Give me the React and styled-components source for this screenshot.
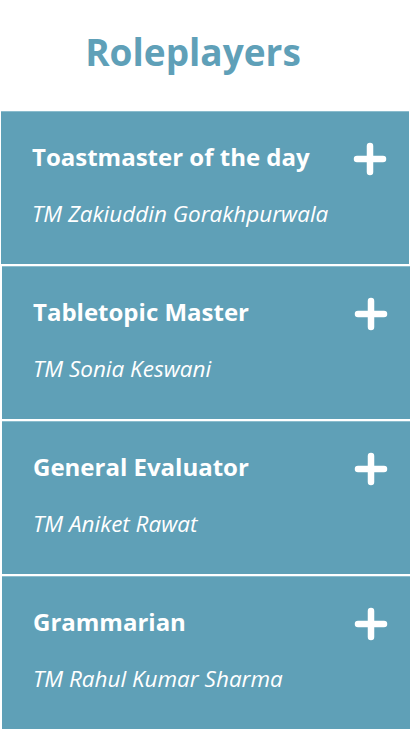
import React from 'react'
import styled, {createGlobalStyle} from 'styled-components'

const roles = [
  {role: 'Toastmaster of the day', name: 'TM Zakiuddin Gorakhpurwala'},
  {role: 'Tabletopic Master', name: 'TM Sonia Keswani'},
  {role: 'General Evaluator', name: 'TM Aniket Rawat'},
  {role: 'Grammarian', name: 'TM Rahul Kumar Sharma'},
]

function PlusIcon() {
  return (
    <svg width="34" height="34" viewBox="0 0 34 34">
      <path d="M17 4v26M4 17h26" stroke="#fff" strokeWidth="6.5" strokeLinecap="round" />
    </svg>
  )
}

export default function App() {
  return (
    <>
      <GlobalStyle />
      <Page>
        <Title>Roleplayers</Title>
        <List>
          {roles.map((r, i) => (
            <Card key={r.role} $shift={i > 0}>
              <CardHead>
                <Role>{r.role}</Role>
                <Toggle><PlusIcon /></Toggle>
              </CardHead>
              <Person>{r.name}</Person>
            </Card>
          ))}
        </List>
      </Page>
    </>
  )
}

const GlobalStyle = createGlobalStyle`
  body {
    margin: 0;
    background: #fff;
    font-family: "Open Sans", "Liberation Sans", sans-serif;
  }
`

const Page = styled.div`
  width: 411px;
  height: 731px;
  overflow: hidden;
`

const Title = styled.h1`
  margin: 0;
  height: 111px;
  display: flex;
  justify-content: center;
  align-items: center;
  padding: 0 25px 8px 0;
  box-sizing: border-box;
  font-size: 37px;
  font-weight: 700;
  color: #5fa0b8;
`

const List = styled.div`
  display: flex;
  flex-direction: column;
  gap: 2px;
`

const Card = styled.div`
  box-sizing: border-box;
  width: 408px;
  height: 153px;
  margin-left: ${p => (p.$shift ? '2px' : '1px')};
  background: #5fa0b7;
  border-top: 1px solid #8bbccd;
  padding: 30px 22px 0 31px;
  color: #fff;
`

const CardHead = styled.div`
  display: flex;
  justify-content: space-between;
  align-items: flex-start;
`

const Role = styled.div`
  font-size: 24px;
  line-height: 30px;
  font-weight: 700;
`

const Toggle = styled.div`
  display: flex;
`

const Person = styled.div`
  margin-top: 23px;
  font-size: 22.5px;
  line-height: 30px;
  font-style: italic;
`
